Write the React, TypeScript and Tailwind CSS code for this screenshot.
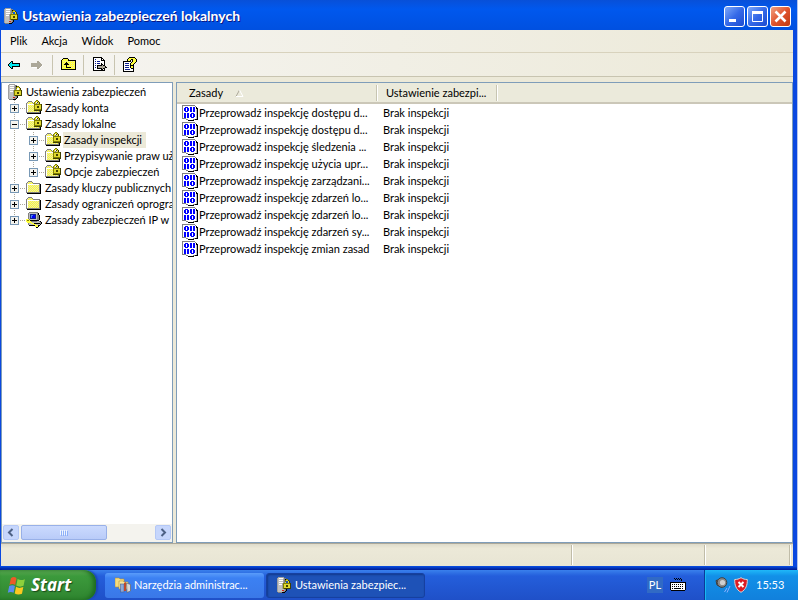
import { ReactNode } from "react";
import { clsx } from "clsx";

const palette: Record<string, string> = {
 k: "#000000",
 d: "#404000",
 g: "#808080",
 s: "#c0c0c0",
 w: "#ffffff",
 y: "#e0d830",
 o: "#808000",
 r: "#d02010",
 b: "#0000ff",
 n: "#102090",
 c: "#00e8f0",
 t: "#aca899",
 l: "#4080f0",
 h: "#ffff40",
 m: "#a0a0a0",
};

// "Y" is the dithered yellow of the old 16 colour icons
const colorAt = (char: string, x: number, y: number) =>
 char === "Y" ? ((x + y) % 2 ? "#ffff30" : "#e8e4b8") : palette[char];

const PixelIcon = ({ rows, className }: { rows: string[]; className?: string }) => (
 <svg viewBox="0 0 16 16" className={clsx("size-4 shrink-0", className)} shapeRendering="crispEdges" aria-hidden="true">
  {rows.flatMap((row, y) =>
   [...row].map((char, x) =>
    char === "." ? null : <rect key={`${x}-${y}`} x={x} y={y} width="1" height="1" fill={colorAt(char, x, y)} />
   )
  )}
 </svg>
);

const server = [
 ".mmmmmm.........",
 "mswwwwsgg.......",
 "msssssmgkoo.....",
 "mswwwwmgoyyd....",
 "msssssmgo..yd...",
 "mswwwwmgy..yd...",
 "mssssmoooooood..",
 "mswwwmoyyyyyyd..",
 "mssssmoyyddyyd..",
 "mssssmoyyddyyd..",
 "mssssmoyyyyyyd..",
 "mssssmoddddddd..",
 "mssssssmgk......",
 "mssssrrmgk......",
 "msssssmgk.......",
 ".ggggkkk........",
];

const folder = [
 "................",
 "..gggg..........",
 ".gYYYYg.........",
 "gYYYYYYggggggg..",
 "gwwwwwwwwwwwwgk.",
 "gwYYYYYYYYYYYgk.",
 "gwYYYYYYYYYYYgk.",
 "gwYYYYYYYYYYYgk.",
 "gwYYYYYYYYYYYgk.",
 "gwYYYYYYYYYYYgk.",
 "gwYYYYYYYYYYYgk.",
 "gwYYYYYYYYYYYgk.",
 "ggggggggggggggk.",
 ".kkkkkkkkkkkkkk.",
 "................",
 "................",
];

const lockedFolder = [
 "..........oo....",
 "..gggg...oyyd...",
 ".gYYYYg.oy.dyd..",
 "gYYYYYYgoygsyd..",
 "gwwwwwwwoooooood",
 "gwYYYYYYoyyyyyyd",
 "gwYYYYYYoyyddyyd",
 "gwYYYYYYoyyddyyd",
 "gwYYYYYYoyyyyyyd",
 "gwYYYYYYoooooood",
 "gwYYYYYYdddddddd",
 "gwYYYYYYYYYYYgk.",
 "ggggggggggggggk.",
 ".kkkkkkkkkkkkkk.",
 "................",
 "................",
];

const ipPolicy = [
 "...ggggggggg....",
 "..gssssssssgk...",
 "..gsnnnnnnsgk...",
 "..gsnllbbnsggk..",
 "..gsnlbbbnsggk..",
 "..gsnlbbbnsggk..",
 "..gsnnnnnnsggk..",
 "hhhgsssssssggk..",
 "hoohkkkkkkkkk...",
 "hhhhhggggggssgk.",
 ".hhhhhssssssssgk",
 "..gsshhhkkkkkkgk",
 "..gsssshhhssssk.",
 "...kkkkkkhhhkk..",
 ".........hhhk...",
 "..........kk....",
];

const binaryPage = [
 "ggggggggggggg...",
 "gwwwwwwwwwwwwg..",
 "gwwbbbwwbbwbbwk.",
 "gwbbwbbwbbwbbwkk",
 "gwbbwbbwbbwbbwsk",
 "gwbbwbbwbbwbbwsk",
 "gwwbbbwwbbwbbwsk",
 "gwwwwwwwwwwwwwsk",
 "gwbbwbbwwbbbwwsk",
 "gwbbwbbwbbwbbwsk",
 "gwbbwbbwbbwbbwsk",
 "gwbbwbbwbbwbbwsk",
 "gwbbwbbwwbbbwwsk",
 "ggggwwwwwwwwwwsk",
 "....ggwwwwwggkkk",
 "......kkkkkk....",
];

const back = [
 "................",
 "................",
 "................",
 "................",
 "....kk..........",
 "...kck..........",
 "..kcckkkkkkkk...",
 ".kcccccccccck...",
 ".kcccccccccck...",
 "..kcckkkkkkkk...",
 "...kck..........",
 "....kk..........",
 "................",
];

const forward = [
 "................",
 "................",
 "................",
 "................",
 ".......tt.......",
 ".......ttt......",
 ".tttttttttt.....",
 ".ttttttttttt....",
 ".tttttttttttw...",
 ".ttttttttttw....",
 "..wwwwwtttw.....",
 ".......ttw......",
 "........w.......",
];

const upFolder = [
 "................",
 "..kkkkk.........",
 ".khhhhhk........",
 "khhhhhhkkkkkkkk.",
 "khYhYhYhYhYhYhk.",
 "khYhhkhhYhYhYhk.",
 "khYhkkkhYhYhYhk.",
 "khYkkkkkYhYhYhk.",
 "khYhhkhhYhYhYhk.",
 "khYhhkhhYhYhYhk.",
 "khYhhkkkkkYhYhk.",
 "khYhYhYhYhYhYhk.",
 "kkkkkkkkkkkkkkk.",
];

const exportList = [
 ".kkkkkkkkk......",
 ".kwwwwwwwkk.....",
 ".kwnwwwwwkwk....",
 ".kwwwwwwwkkkk...",
 ".kwnwnnnwwwwk...",
 ".kwwwwwwwwwwk...",
 ".kwnwnnnwkwwk...",
 ".kwwwwwwwkkwk...",
 ".kwnwkkkkktkk...",
 ".kwwwktttttttk..",
 ".kwnwktttttttkk.",
 ".kwwwkkkkktkk...",
 ".kwwwwwwwkkwk...",
 ".kkkkkkkkkkkk...",
];

const help = [
 "......kkkkkk....",
 ".....khhhhhhk...",
 "....khhhkkhhhk..",
 "....khhk.khhhk..",
 "kkkkkkkk.khhhk..",
 "kwwwwwwwkhhhk...",
 "kwnnnnwkhhhk....",
 "kwwwwwwkhhk.....",
 "kwnnnnwkkkk.....",
 "kwwwwwwkhhk.....",
 "kwnnnnwkhhk.....",
 "kwwwwwwwkkk.....",
 "kwnnnnnwwwk.....",
 "kwwwwwwwwwk.....",
 "kkkkkkkkkkk.....",
];

const keyboard = [
 "................",
 "....k.k.k.k.....",
 ".....k.k.k.k....",
 "...........k....",
 "................",
 "kkkkkkkkkkkkkkkk",
 "kwwwwwwwwwwwwwwk",
 "kwkwkwkwkwkwkwwk",
 "kwwwwwwwwwwwwwwk",
 "kwkwkwkwkwkwkwwk",
 "kwwwwwwwwwwwwwwk",
 "kwkwkkkkkkkwkwwk",
 "kwwwwwwwwwwwwwwk",
 ".kkkkkkkkkkkkkk.",
];

type TNode = {
 label: string;
 icon: string[];
 selected?: boolean;
 open?: boolean;
 children?: TNode[];
};

const nodes: TNode[] = [
 { label: "Zasady konta", icon: lockedFolder },
 {
  label: "Zasady lokalne",
  icon: lockedFolder,
  open: true,
  children: [
   { label: "Zasady inspekcji", icon: lockedFolder, selected: true },
   { label: "Przypisywanie praw użytkownika", icon: lockedFolder },
   { label: "Opcje zabezpieczeń", icon: lockedFolder },
  ],
 },
 { label: "Zasady kluczy publicznych", icon: folder },
 { label: "Zasady ograniczeń oprogramowania", icon: folder },
 { label: "Zasady zabezpieczeń IP w Komputer lokalny", icon: ipPolicy },
];

const policies = [
 "Przeprowadź inspekcję dostępu d...",
 "Przeprowadź inspekcję dostępu d...",
 "Przeprowadź inspekcję śledzenia ...",
 "Przeprowadź inspekcję użycia upr...",
 "Przeprowadź inspekcję zarządzani...",
 "Przeprowadź inspekcję zdarzeń lo...",
 "Przeprowadź inspekcję zdarzeń lo...",
 "Przeprowadź inspekcję zdarzeń sy...",
 "Przeprowadź inspekcję zmian zasad",
];

const Expander = ({ node, last }: { node: TNode; last: boolean }) => (
 <button aria-label={node.label} aria-expanded={!!node.open} className="h-4 w-[21px] shrink-0">
  <svg viewBox="0 0 21 16" className="h-4 w-[21px]" shapeRendering="crispEdges">
   <path d={last ? "M9.5 0V8" : "M9.5 0V16"} stroke="#aca899" strokeDasharray="1 1" />
   <path d="M15 8.5H20" stroke="#aca899" strokeDasharray="1 1" />
   <rect x="5.5" y="4.5" width="8" height="8" fill="#f4f3ee" stroke="#7898b5" />
   <path d={node.open ? "M7 8.5H12" : "M7 8.5H12M9.5 6V11"} stroke="#000" />
  </svg>
 </button>
);

const TreeItems = ({ items, nested }: { items: TNode[]; nested?: boolean }) => (
 <ul role="group">
  {items.map((node, i) => (
   <li key={node.label} role="treeitem" aria-selected={!!node.selected}>
    <div className="flex h-4 items-center">
     {nested && (
      <svg viewBox="0 0 19 16" className="h-4 w-[19px] shrink-0" shapeRendering="crispEdges">
       <path d="M9.5 0V16" stroke="#aca899" strokeDasharray="1 1" />
      </svg>
     )}
     <Expander node={node} last={i === items.length - 1} />
     <PixelIcon rows={node.icon} />
     <span className={clsx("ml-0.5 h-4 px-px leading-4", node.selected && "bg-[#ece9d8] pr-1")}>{node.label}</span>
    </div>
    {node.children && <TreeItems items={node.children} nested />}
   </li>
  ))}
 </ul>
);

const ScrollButton = ({ label, d }: { label: string; d: string }) => (
 <button aria-label={label} className="flex h-[15px] w-4 shrink-0 items-center justify-center rounded-xs border border-[#b4c8f6] bg-[#c6d6fc]">
  <svg viewBox="0 0 8 9" className="h-[9px] w-2" fill="none" stroke="#4d6185" strokeWidth="2">
   <path d={d} />
  </svg>
 </button>
);

const TitleButton = ({ label, close, children }: { label: string; close?: boolean; children: ReactNode }) => (
 <button
  aria-label={label}
  className={clsx(
   "flex size-[21px] items-center justify-center rounded-[3px] border border-white bg-linear-to-br",
   close ? "from-[#f0a080] via-[#e0532c] to-[#c03a10]" : "from-[#7fa8f8] via-[#3569e8] to-[#1c4bd0]"
  )}
 >
  <svg viewBox="0 0 19 19" className="size-[19px]" fill="none" stroke="#fff">
   {children}
  </svg>
 </button>
);

const Divider = () => <span className="mx-1.5 h-5 w-px bg-[#c8c4b0]" />;

const TitleBar = () => (
 <header className="flex h-[30px] shrink-0 items-center bg-linear-to-b from-[#0850d8] via-[#0058ee] via-30% to-[#0050e0] pt-0.5 pr-1.5 pl-1 text-white">
  <PixelIcon rows={server} />
  <h1 className="ml-0.5 flex-1 text-sm font-bold text-shadow-[1px_1px_0_#0a1883]">Ustawienia zabezpieczeń lokalnych</h1>
  <div className="flex gap-0.5">
   <TitleButton label="Minimalizuj"><path d="M4 13.5H11" strokeWidth="3" /></TitleButton>
   <TitleButton label="Maksymalizuj">
    <path d="M4.5 4V14.5H14.5V4" />
    <path d="M4 5.5H15" strokeWidth="3" />
   </TitleButton>
   <TitleButton label="Zamknij" close><path d="M4.5 4.5L14.5 14.5M14.5 4.5L4.5 14.5" strokeWidth="2.6" /></TitleButton>
  </div>
 </header>
);

const Toolbar = () => (
 <div className="flex h-[24px] items-center border-b border-[#c8c4b0] pt-px pl-1.5">
  <button aria-label="Wstecz"><PixelIcon rows={back} /></button>
  <button aria-label="Dalej" className="ml-[7px]"><PixelIcon rows={forward} /></button>
  <Divider />
  <button aria-label="W górę" className="ml-0.5"><PixelIcon rows={upFolder} /></button>
  <Divider />
  <button aria-label="Eksportuj listę" className="ml-0.5"><PixelIcon rows={exportList} /></button>
  <Divider />
  <button aria-label="Pomoc" className="ml-0.5"><PixelIcon rows={help} /></button>
 </div>
);

const TreePane = () => (
 <nav className="flex w-[172px] shrink-0 flex-col overflow-hidden border border-[#7f9db9] bg-white">
  <div role="tree" className="flex-1 overflow-hidden pt-px pl-[3px] whitespace-nowrap">
   <div className="flex h-4 items-center pl-[3px]">
    <PixelIcon rows={server} />
    <span className="ml-px px-px leading-4">Ustawienia zabezpieczeń</span>
   </div>
   <TreeItems items={nodes} />
  </div>
  <div className="flex h-[18px] items-start bg-[#f4f3ee] px-px pt-px">
   <ScrollButton label="Przewiń w lewo" d="M5.5 1L2 4.5L5.5 8" />
   <button aria-label="Pasek przewijania" className="ml-0.5 flex h-[15px] w-[86px] items-center justify-center rounded-xs border border-[#98b0e8] bg-linear-to-b from-[#cbdafe] to-[#b9cbf8]">
    <svg viewBox="0 0 8 6" className="h-1.5 w-2" shapeRendering="crispEdges">
     <path d="M.5 0V5M2.5 0V5M4.5 0V5M6.5 0V5" stroke="#eef4fe" />
     <path d="M1.5 1V6M3.5 1V6M5.5 1V6M7.5 1V6" stroke="#8cb0f8" />
    </svg>
   </button>
   <span className="flex-1" />
   <ScrollButton label="Przewiń w prawo" d="M2.5 1L6 4.5L2.5 8" />
  </div>
 </nav>
);

const PolicyPane = () => (
 <main className="min-w-0 flex-1 overflow-hidden border border-[#7f9db9] bg-white">
  <table className="w-full table-fixed border-collapse text-left whitespace-nowrap">
   <thead>
    <tr className="h-5 border-b-2 border-[#cbc7b8] bg-[#ebeadb]">
     <th className="w-[200px] p-0 font-normal">
      <div className="flex h-4 items-center border-r border-[#c7c5b2] pl-3">
       Zasady
       <svg viewBox="0 0 9 8" className="ml-3 h-2 w-[9px]" fill="none">
        <path d="M4.5 1L1 7.5" stroke="#aca899" />
        <path d="M4.5 1L8 7.5H1" stroke="#fff" />
       </svg>
      </div>
     </th>
     <th className="w-[120px] p-0 font-normal">
      <div className="flex h-4 items-center border-r border-l border-r-[#c7c5b2] border-l-white pl-2">Ustawienie zabezpi...</div>
     </th>
     <th className="p-0"><div className="h-4 border-l border-white" /></th>
    </tr>
   </thead>
   <tbody>
    {policies.map((policy, i) => (
     <tr key={i} className="h-[17px]">
      <td className="p-0 pl-[5px]">
       <div className="flex h-[17px] items-center">
        <PixelIcon rows={binaryPage} />
        <span className="ml-px">{policy}</span>
       </div>
      </td>
      <td className="p-0 pl-1.5">Brak inspekcji</td>
      <td className="p-0" />
     </tr>
    ))}
   </tbody>
  </table>
 </main>
);

const StartButton = () => (
 <button className="flex h-[30px] w-24 items-center rounded-r-xl bg-linear-to-b from-[#5eac56] via-[#3c9a3c] via-20% to-[#2f8530] pl-[7px] shadow-[inset_-3px_0_4px_#1d6a1f,2px_0_2px_#1a45b0]">
  <svg viewBox="0 0 17 17" className="size-[19px]">
   <path d="M3.5 2C5.5 .5 7 .8 8.5 2L7.3 8C5.8 7 4 7 2.2 8Z" fill="#ec5a28" />
   <path d="M9.5 2.7C11.5 4 13.5 3.8 16 2.8L14.8 8.8C12.5 9.8 10.5 9.8 8.3 8.6Z" fill="#8cd03c" />
   <path d="M2 9C4 8 5.6 8 7.1 9L5.9 15C4.3 14 2.5 14 .7 15Z" fill="#5a8cf0" />
   <path d="M8.1 9.7C10 11 12.2 10.8 14.6 9.9L13.4 15.8C11 16.8 9 16.7 6.9 15.6Z" fill="#fcc820" />
  </svg>
  <span className="ml-[5px] font-['Noto_Sans',sans-serif] text-[17px] leading-5 font-bold text-white italic text-shadow-[1px_1px_1px_#1a4a1a]">Start</span>
 </button>
);

const Taskbar = () => (
 <footer className="flex h-[30px] shrink-0 items-center bg-linear-to-b from-[#3a80ec] via-[#245edb] via-20% to-[#1f50c8] text-white">
  <StartButton />
  <button className="ml-[9px] flex h-[25px] w-[159px] items-center rounded-[3px] bg-linear-to-b from-[#5a9cfa] via-[#3c81f3] via-20% to-[#3a78e8] pl-2.5">
   <svg viewBox="0 0 16 16" className="size-4 shrink-0">
    <path d="M0 1H4L5 2H9V10H0Z" fill="#f4dc80" stroke="#b89030" strokeWidth=".6" />
    <path d="M4 4H8L9 5H13V12H4Z" fill="#f8e8a0" stroke="#b89030" strokeWidth=".6" />
    <rect x="5.5" y="7" width="3.5" height="8" fill="#8aa8d8" stroke="#4a6090" strokeWidth=".6" />
    <path d="M9 6L11 5V14H9Z" fill="#c0482c" />
    <path d="M11.5 6L15.5 7.5V14L12 15.5Z" fill="#d8d8d8" stroke="#666" strokeWidth=".7" />
   </svg>
   <span className="ml-[3px]">Narzędzia administrac...</span>
  </button>
  <button className="ml-0.5 flex h-[25px] w-[159px] items-center rounded-[3px] border border-[#1640a0] bg-[#1e52b7] pl-2.5 shadow-[inset_1px_1px_2px_#123a8c]">
   <PixelIcon rows={server} />
   <span className="ml-0.5">Ustawienia zabezpiec...</span>
  </button>
  <span className="flex-1" />
  <button className="mr-[7px] h-4 w-4 bg-[#316ac5] leading-4">PL</button>
  <button aria-label="Klawiatura"><PixelIcon rows={keyboard} /></button>
  <div className="ml-[18px] flex h-[30px] w-[94px] items-center border-l border-[#0a3a9a] bg-linear-to-b from-[#20b8f8] via-[#1290e8] via-20% to-[#1180dc] pl-2.5 shadow-[inset_1px_0_0_#18b8f0]">
   <svg viewBox="0 0 16 16" className="size-4">
    <path d="M1 3.5L5 2.5L8 7L7 10.5L2 8Z" fill="#8c8c8c" stroke="#3c3c3c" />
    <circle cx="7" cy="5.5" r="4.8" fill="#8a8a8a" stroke="#404040" />
    <circle cx="7.5" cy="5.5" r="2.6" fill="#d0d0d0" />
    <path d="M9.5 15L12 11M12 15.5L15 9" stroke="#8cb0ff" />
   </svg>
   <svg viewBox="0 0 14 16" className="ml-[3px] h-4 w-3.5">
    <path d="M7 .7C9 2 11 2.5 13.3 2.5C13.5 8 12 12.5 7 15.3C2 12.5 .5 8 .7 2.5C3 2.5 5 2 7 .7Z" fill="#dc1c24" stroke="#d8d8d8" />
    <path d="M4.5 5L9.5 10M9.5 5L4.5 10" stroke="#fff" strokeWidth="2" />
   </svg>
   <time className="ml-2">15:53</time>
  </div>
 </footer>
);

const App = () => (
 <div className="flex h-screen flex-col overflow-hidden bg-[#b4c4ec] font-[Lato,sans-serif] text-[11px] leading-4 text-black">
  <div className="mr-px flex min-h-0 flex-1 flex-col bg-[#0a48e0]">
   <TitleBar />
   <div className="mr-1 ml-px flex min-h-0 flex-1 flex-col bg-[#ece9d8]">
    <div className="bg-linear-to-r from-[#f6f5f2] to-[#ece9d8]">
     <nav className="flex h-[23px] items-center gap-3.5 border-b border-[#d8d2bd] pl-[9px]">
      <button>Plik</button>
      <button>Akcja</button>
      <button>Widok</button>
      <button>Pomoc</button>
     </nav>
     <Toolbar />
    </div>
    <div className="flex min-h-0 flex-1 gap-[3px] pt-[5px]">
     <TreePane />
     <PolicyPane />
    </div>
    <div className="flex h-[23px] shrink-0 justify-end border-t border-[#aca899] bg-linear-to-b from-[#dedbca] via-[#ece9d8] via-20% to-[#e8e5d4] py-px">
     <span className="w-[133px] border-l border-[#c0bca8] shadow-[inset_1px_0_0_#fff]" />
     <span className="w-[85px] border-l border-[#c0bca8] shadow-[inset_1px_0_0_#fff]" />
     <span className="w-1 border-l border-[#c0bca8] shadow-[inset_1px_0_0_#fff]" />
    </div>
   </div>
   <div className="h-1 shrink-0 bg-linear-to-b from-[#0a50e8] to-[#001a90]" />
  </div>
  <Taskbar />
 </div>
);

export default App;
